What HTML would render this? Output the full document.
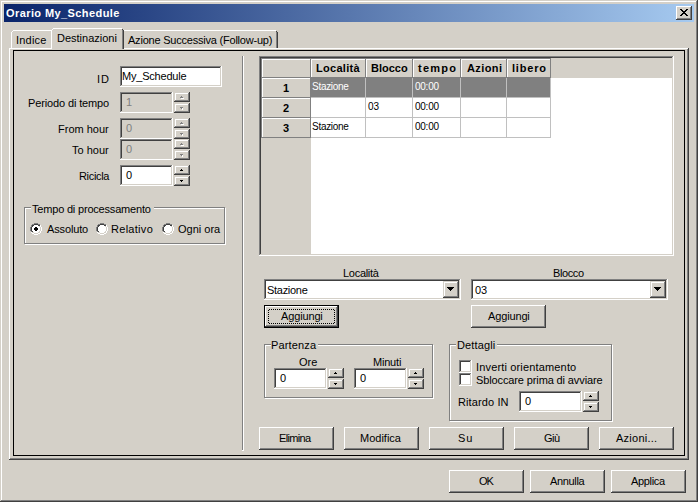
<!DOCTYPE html>
<html><head><meta charset="utf-8"><style>
html,body{margin:0;padding:0;}
body{width:698px;height:502px;background:#D4D0C8;position:relative;overflow:hidden;font:11px/13px "Liberation Sans", sans-serif;color:#000;}
div,span,svg{position:absolute;box-sizing:border-box;}
span{white-space:nowrap;}
</style></head><body>
<div style="left:0px;top:0px;width:698px;height:502px;background:#D4D0C8"></div>
<div style="left:1px;top:1px;width:696px;height:1px;background:#FFFFFF"></div>
<div style="left:1px;top:1px;width:1px;height:500px;background:#FFFFFF"></div>
<div style="left:696px;top:1px;width:1px;height:500px;background:#808080"></div>
<div style="left:1px;top:500px;width:696px;height:1px;background:#808080"></div>
<div style="left:697px;top:0px;width:1px;height:502px;background:#404040"></div>
<div style="left:0px;top:501px;width:698px;height:1px;background:#404040"></div>
<div style="left:4px;top:4px;width:690px;height:18px;background:linear-gradient(to right,#0A246A,#A6CAF0)"></div>
<div style="left:676px;top:6px;width:16px;height:14px;background:#D4D0C8;box-shadow:inset -1px -1px #404040,inset 1px 1px #FFFFFF,inset -2px -2px #808080"></div>
<svg style="left:680px;top:9px" width="8" height="7" shape-rendering="crispEdges"><rect x="0" y="0" width="1" height="1" fill="#000"/><rect x="1" y="0" width="1" height="1" fill="#000"/><rect x="6" y="0" width="1" height="1" fill="#000"/><rect x="7" y="0" width="1" height="1" fill="#000"/><rect x="1" y="1" width="1" height="1" fill="#000"/><rect x="2" y="1" width="1" height="1" fill="#000"/><rect x="5" y="1" width="1" height="1" fill="#000"/><rect x="6" y="1" width="1" height="1" fill="#000"/><rect x="2" y="2" width="1" height="1" fill="#000"/><rect x="3" y="2" width="1" height="1" fill="#000"/><rect x="4" y="2" width="1" height="1" fill="#000"/><rect x="5" y="2" width="1" height="1" fill="#000"/><rect x="3" y="3" width="1" height="1" fill="#000"/><rect x="4" y="3" width="1" height="1" fill="#000"/><rect x="2" y="4" width="1" height="1" fill="#000"/><rect x="3" y="4" width="1" height="1" fill="#000"/><rect x="4" y="4" width="1" height="1" fill="#000"/><rect x="5" y="4" width="1" height="1" fill="#000"/><rect x="1" y="5" width="1" height="1" fill="#000"/><rect x="2" y="5" width="1" height="1" fill="#000"/><rect x="5" y="5" width="1" height="1" fill="#000"/><rect x="6" y="5" width="1" height="1" fill="#000"/><rect x="0" y="6" width="1" height="1" fill="#000"/><rect x="1" y="6" width="1" height="1" fill="#000"/><rect x="6" y="6" width="1" height="1" fill="#000"/><rect x="7" y="6" width="1" height="1" fill="#000"/></svg>
<div style="left:9px;top:48px;width:680px;height:412px;box-shadow:inset -1px -1px #404040,inset 1px 1px #FFFFFF,inset -2px -2px #808080"></div>
<div style="left:13px;top:30px;width:40px;height:1px;background:#FFFFFF"></div>
<div style="left:11px;top:32px;width:1px;height:16px;background:#FFFFFF"></div>
<div style="left:12px;top:31px;width:1px;height:1px;background:#FFFFFF"></div>
<div style="left:122px;top:30px;width:154px;height:1px;background:#FFFFFF"></div>
<div style="left:276px;top:32px;width:1px;height:16px;background:#808080"></div>
<div style="left:277px;top:32px;width:1px;height:16px;background:#404040"></div>
<div style="left:276px;top:31px;width:1px;height:1px;background:#404040"></div>
<div style="left:51px;top:29px;width:73px;height:20px;background:#D4D0C8"></div>
<div style="left:53px;top:28px;width:69px;height:1px;background:#FFFFFF"></div>
<div style="left:51px;top:30px;width:1px;height:19px;background:#FFFFFF"></div>
<div style="left:52px;top:29px;width:1px;height:1px;background:#FFFFFF"></div>
<div style="left:122px;top:30px;width:1px;height:19px;background:#808080"></div>
<div style="left:123px;top:30px;width:1px;height:19px;background:#404040"></div>
<div style="left:122px;top:29px;width:1px;height:1px;background:#404040"></div>
<div style="left:13px;top:50px;width:672px;height:406px;border:1px solid #000"></div>
<div style="left:120px;top:66px;width:102px;height:21px;background:#FFFFFF;box-shadow:inset -1px -1px #FFFFFF,inset 1px 1px #808080,inset -2px -2px #D4D0C8,inset 2px 2px #404040"></div>
<div style="left:120px;top:92px;width:53px;height:21px;background:#D4D0C8;box-shadow:inset -1px -1px #FFFFFF,inset 1px 1px #808080,inset -2px -2px #D4D0C8,inset 2px 2px #404040"></div>
<div style="left:174px;top:92px;width:16px;height:10px;background:#D4D0C8;box-shadow:inset -1px -1px #404040,inset 1px 1px #D4D0C8,inset -2px -2px #808080,inset 2px 2px #FFFFFF"></div>
<div style="left:174px;top:103px;width:16px;height:10px;background:#D4D0C8;box-shadow:inset -1px -1px #404040,inset 1px 1px #D4D0C8,inset -2px -2px #808080,inset 2px 2px #FFFFFF"></div>
<svg style="left:180px;top:96px" width="4" height="3" shape-rendering="crispEdges"><rect x="1" y="0" width="1" height="1" fill="#808080"/><rect x="0" y="1" width="1" height="1" fill="#808080"/><rect x="1" y="1" width="1" height="1" fill="#808080"/><rect x="2" y="1" width="1" height="1" fill="#808080"/><rect x="1" y="2" width="1" height="1" fill="#FFFFFF"/><rect x="2" y="2" width="1" height="1" fill="#FFFFFF"/><rect x="3" y="2" width="1" height="1" fill="#FFFFFF"/></svg>
<svg style="left:180px;top:107px" width="4" height="3" shape-rendering="crispEdges"><rect x="0" y="0" width="1" height="1" fill="#808080"/><rect x="1" y="0" width="1" height="1" fill="#808080"/><rect x="2" y="0" width="1" height="1" fill="#808080"/><rect x="1" y="1" width="1" height="1" fill="#808080"/><rect x="2" y="1" width="1" height="1" fill="#FFFFFF"/><rect x="2" y="2" width="1" height="1" fill="#FFFFFF"/></svg>
<div style="left:120px;top:118px;width:53px;height:21px;background:#D4D0C8;box-shadow:inset -1px -1px #FFFFFF,inset 1px 1px #808080,inset -2px -2px #D4D0C8,inset 2px 2px #404040"></div>
<div style="left:174px;top:118px;width:16px;height:10px;background:#D4D0C8;box-shadow:inset -1px -1px #404040,inset 1px 1px #D4D0C8,inset -2px -2px #808080,inset 2px 2px #FFFFFF"></div>
<div style="left:174px;top:129px;width:16px;height:10px;background:#D4D0C8;box-shadow:inset -1px -1px #404040,inset 1px 1px #D4D0C8,inset -2px -2px #808080,inset 2px 2px #FFFFFF"></div>
<svg style="left:180px;top:122px" width="4" height="3" shape-rendering="crispEdges"><rect x="1" y="0" width="1" height="1" fill="#808080"/><rect x="0" y="1" width="1" height="1" fill="#808080"/><rect x="1" y="1" width="1" height="1" fill="#808080"/><rect x="2" y="1" width="1" height="1" fill="#808080"/><rect x="1" y="2" width="1" height="1" fill="#FFFFFF"/><rect x="2" y="2" width="1" height="1" fill="#FFFFFF"/><rect x="3" y="2" width="1" height="1" fill="#FFFFFF"/></svg>
<svg style="left:180px;top:133px" width="4" height="3" shape-rendering="crispEdges"><rect x="0" y="0" width="1" height="1" fill="#808080"/><rect x="1" y="0" width="1" height="1" fill="#808080"/><rect x="2" y="0" width="1" height="1" fill="#808080"/><rect x="1" y="1" width="1" height="1" fill="#808080"/><rect x="2" y="1" width="1" height="1" fill="#FFFFFF"/><rect x="2" y="2" width="1" height="1" fill="#FFFFFF"/></svg>
<div style="left:120px;top:139px;width:53px;height:21px;background:#D4D0C8;box-shadow:inset -1px -1px #FFFFFF,inset 1px 1px #808080,inset -2px -2px #D4D0C8,inset 2px 2px #404040"></div>
<div style="left:174px;top:139px;width:16px;height:10px;background:#D4D0C8;box-shadow:inset -1px -1px #404040,inset 1px 1px #D4D0C8,inset -2px -2px #808080,inset 2px 2px #FFFFFF"></div>
<div style="left:174px;top:150px;width:16px;height:10px;background:#D4D0C8;box-shadow:inset -1px -1px #404040,inset 1px 1px #D4D0C8,inset -2px -2px #808080,inset 2px 2px #FFFFFF"></div>
<svg style="left:180px;top:143px" width="4" height="3" shape-rendering="crispEdges"><rect x="1" y="0" width="1" height="1" fill="#808080"/><rect x="0" y="1" width="1" height="1" fill="#808080"/><rect x="1" y="1" width="1" height="1" fill="#808080"/><rect x="2" y="1" width="1" height="1" fill="#808080"/><rect x="1" y="2" width="1" height="1" fill="#FFFFFF"/><rect x="2" y="2" width="1" height="1" fill="#FFFFFF"/><rect x="3" y="2" width="1" height="1" fill="#FFFFFF"/></svg>
<svg style="left:180px;top:154px" width="4" height="3" shape-rendering="crispEdges"><rect x="0" y="0" width="1" height="1" fill="#808080"/><rect x="1" y="0" width="1" height="1" fill="#808080"/><rect x="2" y="0" width="1" height="1" fill="#808080"/><rect x="1" y="1" width="1" height="1" fill="#808080"/><rect x="2" y="1" width="1" height="1" fill="#FFFFFF"/><rect x="2" y="2" width="1" height="1" fill="#FFFFFF"/></svg>
<div style="left:120px;top:165px;width:53px;height:21px;background:#FFFFFF;box-shadow:inset -1px -1px #FFFFFF,inset 1px 1px #808080,inset -2px -2px #D4D0C8,inset 2px 2px #404040"></div>
<div style="left:174px;top:165px;width:16px;height:10px;background:#D4D0C8;box-shadow:inset -1px -1px #404040,inset 1px 1px #D4D0C8,inset -2px -2px #808080,inset 2px 2px #FFFFFF"></div>
<div style="left:174px;top:176px;width:16px;height:10px;background:#D4D0C8;box-shadow:inset -1px -1px #404040,inset 1px 1px #D4D0C8,inset -2px -2px #808080,inset 2px 2px #FFFFFF"></div>
<svg style="left:180px;top:169px" width="3" height="2" shape-rendering="crispEdges"><rect x="1" y="0" width="1" height="1" fill="#000"/><rect x="0" y="1" width="1" height="1" fill="#000"/><rect x="1" y="1" width="1" height="1" fill="#000"/><rect x="2" y="1" width="1" height="1" fill="#000"/></svg>
<svg style="left:180px;top:180px" width="3" height="2" shape-rendering="crispEdges"><rect x="0" y="0" width="1" height="1" fill="#000"/><rect x="1" y="0" width="1" height="1" fill="#000"/><rect x="2" y="0" width="1" height="1" fill="#000"/><rect x="1" y="1" width="1" height="1" fill="#000"/></svg>
<div style="left:25px;top:208px;width:201px;height:37px;border:1px solid #FFFFFF;box-sizing:border-box"></div>
<div style="left:24px;top:207px;width:201px;height:37px;border:1px solid #808080;box-sizing:border-box"></div>
<div style="left:31px;top:203px;width:123px;height:8px;background:#D4D0C8"></div>
<svg style="left:30px;top:223px" width="12" height="12" shape-rendering="crispEdges"><rect x="4" y="0" width="1" height="1" fill="#808080"/><rect x="5" y="0" width="1" height="1" fill="#808080"/><rect x="6" y="0" width="1" height="1" fill="#808080"/><rect x="7" y="0" width="1" height="1" fill="#808080"/><rect x="2" y="1" width="1" height="1" fill="#808080"/><rect x="3" y="1" width="1" height="1" fill="#808080"/><rect x="4" y="1" width="1" height="1" fill="#404040"/><rect x="5" y="1" width="1" height="1" fill="#404040"/><rect x="6" y="1" width="1" height="1" fill="#404040"/><rect x="7" y="1" width="1" height="1" fill="#404040"/><rect x="8" y="1" width="1" height="1" fill="#808080"/><rect x="9" y="1" width="1" height="1" fill="#808080"/><rect x="1" y="2" width="1" height="1" fill="#808080"/><rect x="2" y="2" width="1" height="1" fill="#404040"/><rect x="3" y="2" width="1" height="1" fill="#404040"/><rect x="4" y="2" width="1" height="1" fill="#FFFFFF"/><rect x="5" y="2" width="1" height="1" fill="#FFFFFF"/><rect x="6" y="2" width="1" height="1" fill="#FFFFFF"/><rect x="7" y="2" width="1" height="1" fill="#FFFFFF"/><rect x="8" y="2" width="1" height="1" fill="#404040"/><rect x="9" y="2" width="1" height="1" fill="#404040"/><rect x="10" y="2" width="1" height="1" fill="#FFFFFF"/><rect x="1" y="3" width="1" height="1" fill="#808080"/><rect x="2" y="3" width="1" height="1" fill="#404040"/><rect x="3" y="3" width="1" height="1" fill="#FFFFFF"/><rect x="4" y="3" width="1" height="1" fill="#FFFFFF"/><rect x="5" y="3" width="1" height="1" fill="#FFFFFF"/><rect x="6" y="3" width="1" height="1" fill="#FFFFFF"/><rect x="7" y="3" width="1" height="1" fill="#FFFFFF"/><rect x="8" y="3" width="1" height="1" fill="#FFFFFF"/><rect x="9" y="3" width="1" height="1" fill="#D4D0C8"/><rect x="10" y="3" width="1" height="1" fill="#FFFFFF"/><rect x="0" y="4" width="1" height="1" fill="#808080"/><rect x="1" y="4" width="1" height="1" fill="#404040"/><rect x="2" y="4" width="1" height="1" fill="#FFFFFF"/><rect x="3" y="4" width="1" height="1" fill="#FFFFFF"/><rect x="4" y="4" width="1" height="1" fill="#FFFFFF"/><rect x="5" y="4" width="1" height="1" fill="#FFFFFF"/><rect x="6" y="4" width="1" height="1" fill="#FFFFFF"/><rect x="7" y="4" width="1" height="1" fill="#FFFFFF"/><rect x="8" y="4" width="1" height="1" fill="#FFFFFF"/><rect x="9" y="4" width="1" height="1" fill="#FFFFFF"/><rect x="10" y="4" width="1" height="1" fill="#D4D0C8"/><rect x="11" y="4" width="1" height="1" fill="#FFFFFF"/><rect x="0" y="5" width="1" height="1" fill="#808080"/><rect x="1" y="5" width="1" height="1" fill="#404040"/><rect x="2" y="5" width="1" height="1" fill="#FFFFFF"/><rect x="3" y="5" width="1" height="1" fill="#FFFFFF"/><rect x="4" y="5" width="1" height="1" fill="#FFFFFF"/><rect x="5" y="5" width="1" height="1" fill="#FFFFFF"/><rect x="6" y="5" width="1" height="1" fill="#FFFFFF"/><rect x="7" y="5" width="1" height="1" fill="#FFFFFF"/><rect x="8" y="5" width="1" height="1" fill="#FFFFFF"/><rect x="9" y="5" width="1" height="1" fill="#FFFFFF"/><rect x="10" y="5" width="1" height="1" fill="#D4D0C8"/><rect x="11" y="5" width="1" height="1" fill="#FFFFFF"/><rect x="0" y="6" width="1" height="1" fill="#808080"/><rect x="1" y="6" width="1" height="1" fill="#404040"/><rect x="2" y="6" width="1" height="1" fill="#FFFFFF"/><rect x="3" y="6" width="1" height="1" fill="#FFFFFF"/><rect x="4" y="6" width="1" height="1" fill="#FFFFFF"/><rect x="5" y="6" width="1" height="1" fill="#FFFFFF"/><rect x="6" y="6" width="1" height="1" fill="#FFFFFF"/><rect x="7" y="6" width="1" height="1" fill="#FFFFFF"/><rect x="8" y="6" width="1" height="1" fill="#FFFFFF"/><rect x="9" y="6" width="1" height="1" fill="#FFFFFF"/><rect x="10" y="6" width="1" height="1" fill="#D4D0C8"/><rect x="11" y="6" width="1" height="1" fill="#FFFFFF"/><rect x="0" y="7" width="1" height="1" fill="#808080"/><rect x="1" y="7" width="1" height="1" fill="#404040"/><rect x="2" y="7" width="1" height="1" fill="#FFFFFF"/><rect x="3" y="7" width="1" height="1" fill="#FFFFFF"/><rect x="4" y="7" width="1" height="1" fill="#FFFFFF"/><rect x="5" y="7" width="1" height="1" fill="#FFFFFF"/><rect x="6" y="7" width="1" height="1" fill="#FFFFFF"/><rect x="7" y="7" width="1" height="1" fill="#FFFFFF"/><rect x="8" y="7" width="1" height="1" fill="#FFFFFF"/><rect x="9" y="7" width="1" height="1" fill="#FFFFFF"/><rect x="10" y="7" width="1" height="1" fill="#D4D0C8"/><rect x="11" y="7" width="1" height="1" fill="#FFFFFF"/><rect x="1" y="8" width="1" height="1" fill="#808080"/><rect x="2" y="8" width="1" height="1" fill="#404040"/><rect x="3" y="8" width="1" height="1" fill="#FFFFFF"/><rect x="4" y="8" width="1" height="1" fill="#FFFFFF"/><rect x="5" y="8" width="1" height="1" fill="#FFFFFF"/><rect x="6" y="8" width="1" height="1" fill="#FFFFFF"/><rect x="7" y="8" width="1" height="1" fill="#FFFFFF"/><rect x="8" y="8" width="1" height="1" fill="#FFFFFF"/><rect x="9" y="8" width="1" height="1" fill="#D4D0C8"/><rect x="10" y="8" width="1" height="1" fill="#FFFFFF"/><rect x="1" y="9" width="1" height="1" fill="#FFFFFF"/><rect x="2" y="9" width="1" height="1" fill="#D4D0C8"/><rect x="3" y="9" width="1" height="1" fill="#D4D0C8"/><rect x="4" y="9" width="1" height="1" fill="#FFFFFF"/><rect x="5" y="9" width="1" height="1" fill="#FFFFFF"/><rect x="6" y="9" width="1" height="1" fill="#FFFFFF"/><rect x="7" y="9" width="1" height="1" fill="#FFFFFF"/><rect x="8" y="9" width="1" height="1" fill="#D4D0C8"/><rect x="9" y="9" width="1" height="1" fill="#D4D0C8"/><rect x="10" y="9" width="1" height="1" fill="#FFFFFF"/><rect x="2" y="10" width="1" height="1" fill="#FFFFFF"/><rect x="3" y="10" width="1" height="1" fill="#FFFFFF"/><rect x="4" y="10" width="1" height="1" fill="#D4D0C8"/><rect x="5" y="10" width="1" height="1" fill="#D4D0C8"/><rect x="6" y="10" width="1" height="1" fill="#D4D0C8"/><rect x="7" y="10" width="1" height="1" fill="#D4D0C8"/><rect x="8" y="10" width="1" height="1" fill="#FFFFFF"/><rect x="9" y="10" width="1" height="1" fill="#FFFFFF"/><rect x="4" y="11" width="1" height="1" fill="#FFFFFF"/><rect x="5" y="11" width="1" height="1" fill="#FFFFFF"/><rect x="6" y="11" width="1" height="1" fill="#FFFFFF"/><rect x="7" y="11" width="1" height="1" fill="#FFFFFF"/></svg>
<svg style="left:34px;top:227px" width="4" height="4" shape-rendering="crispEdges"><rect x="1" y="0" width="1" height="1" fill="#000"/><rect x="2" y="0" width="1" height="1" fill="#000"/><rect x="0" y="1" width="1" height="1" fill="#000"/><rect x="1" y="1" width="1" height="1" fill="#000"/><rect x="2" y="1" width="1" height="1" fill="#000"/><rect x="3" y="1" width="1" height="1" fill="#000"/><rect x="0" y="2" width="1" height="1" fill="#000"/><rect x="1" y="2" width="1" height="1" fill="#000"/><rect x="2" y="2" width="1" height="1" fill="#000"/><rect x="3" y="2" width="1" height="1" fill="#000"/><rect x="1" y="3" width="1" height="1" fill="#000"/><rect x="2" y="3" width="1" height="1" fill="#000"/></svg>
<svg style="left:96px;top:223px" width="12" height="12" shape-rendering="crispEdges"><rect x="4" y="0" width="1" height="1" fill="#808080"/><rect x="5" y="0" width="1" height="1" fill="#808080"/><rect x="6" y="0" width="1" height="1" fill="#808080"/><rect x="7" y="0" width="1" height="1" fill="#808080"/><rect x="2" y="1" width="1" height="1" fill="#808080"/><rect x="3" y="1" width="1" height="1" fill="#808080"/><rect x="4" y="1" width="1" height="1" fill="#404040"/><rect x="5" y="1" width="1" height="1" fill="#404040"/><rect x="6" y="1" width="1" height="1" fill="#404040"/><rect x="7" y="1" width="1" height="1" fill="#404040"/><rect x="8" y="1" width="1" height="1" fill="#808080"/><rect x="9" y="1" width="1" height="1" fill="#808080"/><rect x="1" y="2" width="1" height="1" fill="#808080"/><rect x="2" y="2" width="1" height="1" fill="#404040"/><rect x="3" y="2" width="1" height="1" fill="#404040"/><rect x="4" y="2" width="1" height="1" fill="#FFFFFF"/><rect x="5" y="2" width="1" height="1" fill="#FFFFFF"/><rect x="6" y="2" width="1" height="1" fill="#FFFFFF"/><rect x="7" y="2" width="1" height="1" fill="#FFFFFF"/><rect x="8" y="2" width="1" height="1" fill="#404040"/><rect x="9" y="2" width="1" height="1" fill="#404040"/><rect x="10" y="2" width="1" height="1" fill="#FFFFFF"/><rect x="1" y="3" width="1" height="1" fill="#808080"/><rect x="2" y="3" width="1" height="1" fill="#404040"/><rect x="3" y="3" width="1" height="1" fill="#FFFFFF"/><rect x="4" y="3" width="1" height="1" fill="#FFFFFF"/><rect x="5" y="3" width="1" height="1" fill="#FFFFFF"/><rect x="6" y="3" width="1" height="1" fill="#FFFFFF"/><rect x="7" y="3" width="1" height="1" fill="#FFFFFF"/><rect x="8" y="3" width="1" height="1" fill="#FFFFFF"/><rect x="9" y="3" width="1" height="1" fill="#D4D0C8"/><rect x="10" y="3" width="1" height="1" fill="#FFFFFF"/><rect x="0" y="4" width="1" height="1" fill="#808080"/><rect x="1" y="4" width="1" height="1" fill="#404040"/><rect x="2" y="4" width="1" height="1" fill="#FFFFFF"/><rect x="3" y="4" width="1" height="1" fill="#FFFFFF"/><rect x="4" y="4" width="1" height="1" fill="#FFFFFF"/><rect x="5" y="4" width="1" height="1" fill="#FFFFFF"/><rect x="6" y="4" width="1" height="1" fill="#FFFFFF"/><rect x="7" y="4" width="1" height="1" fill="#FFFFFF"/><rect x="8" y="4" width="1" height="1" fill="#FFFFFF"/><rect x="9" y="4" width="1" height="1" fill="#FFFFFF"/><rect x="10" y="4" width="1" height="1" fill="#D4D0C8"/><rect x="11" y="4" width="1" height="1" fill="#FFFFFF"/><rect x="0" y="5" width="1" height="1" fill="#808080"/><rect x="1" y="5" width="1" height="1" fill="#404040"/><rect x="2" y="5" width="1" height="1" fill="#FFFFFF"/><rect x="3" y="5" width="1" height="1" fill="#FFFFFF"/><rect x="4" y="5" width="1" height="1" fill="#FFFFFF"/><rect x="5" y="5" width="1" height="1" fill="#FFFFFF"/><rect x="6" y="5" width="1" height="1" fill="#FFFFFF"/><rect x="7" y="5" width="1" height="1" fill="#FFFFFF"/><rect x="8" y="5" width="1" height="1" fill="#FFFFFF"/><rect x="9" y="5" width="1" height="1" fill="#FFFFFF"/><rect x="10" y="5" width="1" height="1" fill="#D4D0C8"/><rect x="11" y="5" width="1" height="1" fill="#FFFFFF"/><rect x="0" y="6" width="1" height="1" fill="#808080"/><rect x="1" y="6" width="1" height="1" fill="#404040"/><rect x="2" y="6" width="1" height="1" fill="#FFFFFF"/><rect x="3" y="6" width="1" height="1" fill="#FFFFFF"/><rect x="4" y="6" width="1" height="1" fill="#FFFFFF"/><rect x="5" y="6" width="1" height="1" fill="#FFFFFF"/><rect x="6" y="6" width="1" height="1" fill="#FFFFFF"/><rect x="7" y="6" width="1" height="1" fill="#FFFFFF"/><rect x="8" y="6" width="1" height="1" fill="#FFFFFF"/><rect x="9" y="6" width="1" height="1" fill="#FFFFFF"/><rect x="10" y="6" width="1" height="1" fill="#D4D0C8"/><rect x="11" y="6" width="1" height="1" fill="#FFFFFF"/><rect x="0" y="7" width="1" height="1" fill="#808080"/><rect x="1" y="7" width="1" height="1" fill="#404040"/><rect x="2" y="7" width="1" height="1" fill="#FFFFFF"/><rect x="3" y="7" width="1" height="1" fill="#FFFFFF"/><rect x="4" y="7" width="1" height="1" fill="#FFFFFF"/><rect x="5" y="7" width="1" height="1" fill="#FFFFFF"/><rect x="6" y="7" width="1" height="1" fill="#FFFFFF"/><rect x="7" y="7" width="1" height="1" fill="#FFFFFF"/><rect x="8" y="7" width="1" height="1" fill="#FFFFFF"/><rect x="9" y="7" width="1" height="1" fill="#FFFFFF"/><rect x="10" y="7" width="1" height="1" fill="#D4D0C8"/><rect x="11" y="7" width="1" height="1" fill="#FFFFFF"/><rect x="1" y="8" width="1" height="1" fill="#808080"/><rect x="2" y="8" width="1" height="1" fill="#404040"/><rect x="3" y="8" width="1" height="1" fill="#FFFFFF"/><rect x="4" y="8" width="1" height="1" fill="#FFFFFF"/><rect x="5" y="8" width="1" height="1" fill="#FFFFFF"/><rect x="6" y="8" width="1" height="1" fill="#FFFFFF"/><rect x="7" y="8" width="1" height="1" fill="#FFFFFF"/><rect x="8" y="8" width="1" height="1" fill="#FFFFFF"/><rect x="9" y="8" width="1" height="1" fill="#D4D0C8"/><rect x="10" y="8" width="1" height="1" fill="#FFFFFF"/><rect x="1" y="9" width="1" height="1" fill="#FFFFFF"/><rect x="2" y="9" width="1" height="1" fill="#D4D0C8"/><rect x="3" y="9" width="1" height="1" fill="#D4D0C8"/><rect x="4" y="9" width="1" height="1" fill="#FFFFFF"/><rect x="5" y="9" width="1" height="1" fill="#FFFFFF"/><rect x="6" y="9" width="1" height="1" fill="#FFFFFF"/><rect x="7" y="9" width="1" height="1" fill="#FFFFFF"/><rect x="8" y="9" width="1" height="1" fill="#D4D0C8"/><rect x="9" y="9" width="1" height="1" fill="#D4D0C8"/><rect x="10" y="9" width="1" height="1" fill="#FFFFFF"/><rect x="2" y="10" width="1" height="1" fill="#FFFFFF"/><rect x="3" y="10" width="1" height="1" fill="#FFFFFF"/><rect x="4" y="10" width="1" height="1" fill="#D4D0C8"/><rect x="5" y="10" width="1" height="1" fill="#D4D0C8"/><rect x="6" y="10" width="1" height="1" fill="#D4D0C8"/><rect x="7" y="10" width="1" height="1" fill="#D4D0C8"/><rect x="8" y="10" width="1" height="1" fill="#FFFFFF"/><rect x="9" y="10" width="1" height="1" fill="#FFFFFF"/><rect x="4" y="11" width="1" height="1" fill="#FFFFFF"/><rect x="5" y="11" width="1" height="1" fill="#FFFFFF"/><rect x="6" y="11" width="1" height="1" fill="#FFFFFF"/><rect x="7" y="11" width="1" height="1" fill="#FFFFFF"/></svg>
<svg style="left:162px;top:223px" width="12" height="12" shape-rendering="crispEdges"><rect x="4" y="0" width="1" height="1" fill="#808080"/><rect x="5" y="0" width="1" height="1" fill="#808080"/><rect x="6" y="0" width="1" height="1" fill="#808080"/><rect x="7" y="0" width="1" height="1" fill="#808080"/><rect x="2" y="1" width="1" height="1" fill="#808080"/><rect x="3" y="1" width="1" height="1" fill="#808080"/><rect x="4" y="1" width="1" height="1" fill="#404040"/><rect x="5" y="1" width="1" height="1" fill="#404040"/><rect x="6" y="1" width="1" height="1" fill="#404040"/><rect x="7" y="1" width="1" height="1" fill="#404040"/><rect x="8" y="1" width="1" height="1" fill="#808080"/><rect x="9" y="1" width="1" height="1" fill="#808080"/><rect x="1" y="2" width="1" height="1" fill="#808080"/><rect x="2" y="2" width="1" height="1" fill="#404040"/><rect x="3" y="2" width="1" height="1" fill="#404040"/><rect x="4" y="2" width="1" height="1" fill="#FFFFFF"/><rect x="5" y="2" width="1" height="1" fill="#FFFFFF"/><rect x="6" y="2" width="1" height="1" fill="#FFFFFF"/><rect x="7" y="2" width="1" height="1" fill="#FFFFFF"/><rect x="8" y="2" width="1" height="1" fill="#404040"/><rect x="9" y="2" width="1" height="1" fill="#404040"/><rect x="10" y="2" width="1" height="1" fill="#FFFFFF"/><rect x="1" y="3" width="1" height="1" fill="#808080"/><rect x="2" y="3" width="1" height="1" fill="#404040"/><rect x="3" y="3" width="1" height="1" fill="#FFFFFF"/><rect x="4" y="3" width="1" height="1" fill="#FFFFFF"/><rect x="5" y="3" width="1" height="1" fill="#FFFFFF"/><rect x="6" y="3" width="1" height="1" fill="#FFFFFF"/><rect x="7" y="3" width="1" height="1" fill="#FFFFFF"/><rect x="8" y="3" width="1" height="1" fill="#FFFFFF"/><rect x="9" y="3" width="1" height="1" fill="#D4D0C8"/><rect x="10" y="3" width="1" height="1" fill="#FFFFFF"/><rect x="0" y="4" width="1" height="1" fill="#808080"/><rect x="1" y="4" width="1" height="1" fill="#404040"/><rect x="2" y="4" width="1" height="1" fill="#FFFFFF"/><rect x="3" y="4" width="1" height="1" fill="#FFFFFF"/><rect x="4" y="4" width="1" height="1" fill="#FFFFFF"/><rect x="5" y="4" width="1" height="1" fill="#FFFFFF"/><rect x="6" y="4" width="1" height="1" fill="#FFFFFF"/><rect x="7" y="4" width="1" height="1" fill="#FFFFFF"/><rect x="8" y="4" width="1" height="1" fill="#FFFFFF"/><rect x="9" y="4" width="1" height="1" fill="#FFFFFF"/><rect x="10" y="4" width="1" height="1" fill="#D4D0C8"/><rect x="11" y="4" width="1" height="1" fill="#FFFFFF"/><rect x="0" y="5" width="1" height="1" fill="#808080"/><rect x="1" y="5" width="1" height="1" fill="#404040"/><rect x="2" y="5" width="1" height="1" fill="#FFFFFF"/><rect x="3" y="5" width="1" height="1" fill="#FFFFFF"/><rect x="4" y="5" width="1" height="1" fill="#FFFFFF"/><rect x="5" y="5" width="1" height="1" fill="#FFFFFF"/><rect x="6" y="5" width="1" height="1" fill="#FFFFFF"/><rect x="7" y="5" width="1" height="1" fill="#FFFFFF"/><rect x="8" y="5" width="1" height="1" fill="#FFFFFF"/><rect x="9" y="5" width="1" height="1" fill="#FFFFFF"/><rect x="10" y="5" width="1" height="1" fill="#D4D0C8"/><rect x="11" y="5" width="1" height="1" fill="#FFFFFF"/><rect x="0" y="6" width="1" height="1" fill="#808080"/><rect x="1" y="6" width="1" height="1" fill="#404040"/><rect x="2" y="6" width="1" height="1" fill="#FFFFFF"/><rect x="3" y="6" width="1" height="1" fill="#FFFFFF"/><rect x="4" y="6" width="1" height="1" fill="#FFFFFF"/><rect x="5" y="6" width="1" height="1" fill="#FFFFFF"/><rect x="6" y="6" width="1" height="1" fill="#FFFFFF"/><rect x="7" y="6" width="1" height="1" fill="#FFFFFF"/><rect x="8" y="6" width="1" height="1" fill="#FFFFFF"/><rect x="9" y="6" width="1" height="1" fill="#FFFFFF"/><rect x="10" y="6" width="1" height="1" fill="#D4D0C8"/><rect x="11" y="6" width="1" height="1" fill="#FFFFFF"/><rect x="0" y="7" width="1" height="1" fill="#808080"/><rect x="1" y="7" width="1" height="1" fill="#404040"/><rect x="2" y="7" width="1" height="1" fill="#FFFFFF"/><rect x="3" y="7" width="1" height="1" fill="#FFFFFF"/><rect x="4" y="7" width="1" height="1" fill="#FFFFFF"/><rect x="5" y="7" width="1" height="1" fill="#FFFFFF"/><rect x="6" y="7" width="1" height="1" fill="#FFFFFF"/><rect x="7" y="7" width="1" height="1" fill="#FFFFFF"/><rect x="8" y="7" width="1" height="1" fill="#FFFFFF"/><rect x="9" y="7" width="1" height="1" fill="#FFFFFF"/><rect x="10" y="7" width="1" height="1" fill="#D4D0C8"/><rect x="11" y="7" width="1" height="1" fill="#FFFFFF"/><rect x="1" y="8" width="1" height="1" fill="#808080"/><rect x="2" y="8" width="1" height="1" fill="#404040"/><rect x="3" y="8" width="1" height="1" fill="#FFFFFF"/><rect x="4" y="8" width="1" height="1" fill="#FFFFFF"/><rect x="5" y="8" width="1" height="1" fill="#FFFFFF"/><rect x="6" y="8" width="1" height="1" fill="#FFFFFF"/><rect x="7" y="8" width="1" height="1" fill="#FFFFFF"/><rect x="8" y="8" width="1" height="1" fill="#FFFFFF"/><rect x="9" y="8" width="1" height="1" fill="#D4D0C8"/><rect x="10" y="8" width="1" height="1" fill="#FFFFFF"/><rect x="1" y="9" width="1" height="1" fill="#FFFFFF"/><rect x="2" y="9" width="1" height="1" fill="#D4D0C8"/><rect x="3" y="9" width="1" height="1" fill="#D4D0C8"/><rect x="4" y="9" width="1" height="1" fill="#FFFFFF"/><rect x="5" y="9" width="1" height="1" fill="#FFFFFF"/><rect x="6" y="9" width="1" height="1" fill="#FFFFFF"/><rect x="7" y="9" width="1" height="1" fill="#FFFFFF"/><rect x="8" y="9" width="1" height="1" fill="#D4D0C8"/><rect x="9" y="9" width="1" height="1" fill="#D4D0C8"/><rect x="10" y="9" width="1" height="1" fill="#FFFFFF"/><rect x="2" y="10" width="1" height="1" fill="#FFFFFF"/><rect x="3" y="10" width="1" height="1" fill="#FFFFFF"/><rect x="4" y="10" width="1" height="1" fill="#D4D0C8"/><rect x="5" y="10" width="1" height="1" fill="#D4D0C8"/><rect x="6" y="10" width="1" height="1" fill="#D4D0C8"/><rect x="7" y="10" width="1" height="1" fill="#D4D0C8"/><rect x="8" y="10" width="1" height="1" fill="#FFFFFF"/><rect x="9" y="10" width="1" height="1" fill="#FFFFFF"/><rect x="4" y="11" width="1" height="1" fill="#FFFFFF"/><rect x="5" y="11" width="1" height="1" fill="#FFFFFF"/><rect x="6" y="11" width="1" height="1" fill="#FFFFFF"/><rect x="7" y="11" width="1" height="1" fill="#FFFFFF"/></svg>
<div style="left:242px;top:56px;width:1px;height:394px;background:#808080"></div>
<div style="left:243px;top:56px;width:1px;height:395px;background:#FFFFFF"></div>
<div style="left:242px;top:450px;width:1px;height:1px;background:#FFFFFF"></div>
<div style="left:259px;top:56px;width:415px;height:200px;background:#FFFFFF;box-shadow:inset -1px -1px #FFFFFF,inset 1px 1px #808080,inset -2px -2px #D4D0C8,inset 2px 2px #404040"></div>
<div style="left:261px;top:58px;width:411px;height:196px;background:#FFFFFF"></div>
<div style="left:261px;top:58px;width:50px;height:196px;background:#D4D0C8"></div>
<div style="left:261px;top:58px;width:411px;height:20px;background:#D4D0C8"></div>
<div style="left:311px;top:78px;width:240px;height:19px;background:#808080"></div>
<div style="left:311px;top:97px;width:240px;height:1px;background:#C0C0C0"></div>
<div style="left:311px;top:117px;width:240px;height:1px;background:#C0C0C0"></div>
<div style="left:311px;top:137px;width:240px;height:1px;background:#C0C0C0"></div>
<div style="left:365px;top:78px;width:1px;height:60px;background:#C0C0C0"></div>
<div style="left:412px;top:78px;width:1px;height:60px;background:#C0C0C0"></div>
<div style="left:460px;top:78px;width:1px;height:60px;background:#C0C0C0"></div>
<div style="left:506px;top:78px;width:1px;height:60px;background:#C0C0C0"></div>
<div style="left:550px;top:78px;width:1px;height:60px;background:#C0C0C0"></div>
<div style="left:262px;top:59px;width:1px;height:18px;background:#FFFFFF"></div>
<div style="left:262px;top:59px;width:48px;height:1px;background:#FFFFFF"></div>
<div style="left:311px;top:59px;width:1px;height:18px;background:#FFFFFF"></div>
<div style="left:311px;top:59px;width:54px;height:1px;background:#FFFFFF"></div>
<div style="left:366px;top:59px;width:1px;height:18px;background:#FFFFFF"></div>
<div style="left:366px;top:59px;width:46px;height:1px;background:#FFFFFF"></div>
<div style="left:413px;top:59px;width:1px;height:18px;background:#FFFFFF"></div>
<div style="left:413px;top:59px;width:47px;height:1px;background:#FFFFFF"></div>
<div style="left:461px;top:59px;width:1px;height:18px;background:#FFFFFF"></div>
<div style="left:461px;top:59px;width:45px;height:1px;background:#FFFFFF"></div>
<div style="left:507px;top:59px;width:1px;height:18px;background:#FFFFFF"></div>
<div style="left:507px;top:59px;width:43px;height:1px;background:#FFFFFF"></div>
<div style="left:261px;top:58px;width:1px;height:20px;background:#808080"></div>
<div style="left:310px;top:58px;width:1px;height:20px;background:#808080"></div>
<div style="left:365px;top:58px;width:1px;height:20px;background:#808080"></div>
<div style="left:412px;top:58px;width:1px;height:20px;background:#808080"></div>
<div style="left:460px;top:58px;width:1px;height:20px;background:#808080"></div>
<div style="left:506px;top:58px;width:1px;height:20px;background:#808080"></div>
<div style="left:550px;top:58px;width:1px;height:20px;background:#808080"></div>
<div style="left:261px;top:58px;width:290px;height:1px;background:#808080"></div>
<div style="left:261px;top:77px;width:290px;height:1px;background:#808080"></div>
<div style="left:262px;top:78px;width:48px;height:1px;background:#FFFFFF"></div>
<div style="left:262px;top:78px;width:1px;height:19px;background:#FFFFFF"></div>
<div style="left:261px;top:97px;width:50px;height:1px;background:#808080"></div>
<div style="left:262px;top:98px;width:48px;height:1px;background:#FFFFFF"></div>
<div style="left:262px;top:98px;width:1px;height:19px;background:#FFFFFF"></div>
<div style="left:261px;top:117px;width:50px;height:1px;background:#808080"></div>
<div style="left:262px;top:118px;width:48px;height:1px;background:#FFFFFF"></div>
<div style="left:262px;top:118px;width:1px;height:19px;background:#FFFFFF"></div>
<div style="left:261px;top:137px;width:50px;height:1px;background:#808080"></div>
<div style="left:261px;top:58px;width:1px;height:80px;background:#808080"></div>
<div style="left:310px;top:58px;width:1px;height:80px;background:#808080"></div>
<div style="left:264px;top:279px;width:197px;height:21px;background:#FFFFFF;box-shadow:inset -1px -1px #FFFFFF,inset 1px 1px #808080,inset -2px -2px #D4D0C8,inset 2px 2px #404040"></div>
<div style="left:443px;top:281px;width:16px;height:17px;background:#D4D0C8;box-shadow:inset -1px -1px #404040,inset 1px 1px #D4D0C8,inset -2px -2px #808080,inset 2px 2px #FFFFFF"></div>
<svg style="left:447px;top:287px" width="7" height="4" shape-rendering="crispEdges"><rect x="0" y="0" width="1" height="1" fill="#000"/><rect x="1" y="0" width="1" height="1" fill="#000"/><rect x="2" y="0" width="1" height="1" fill="#000"/><rect x="3" y="0" width="1" height="1" fill="#000"/><rect x="4" y="0" width="1" height="1" fill="#000"/><rect x="5" y="0" width="1" height="1" fill="#000"/><rect x="6" y="0" width="1" height="1" fill="#000"/><rect x="1" y="1" width="1" height="1" fill="#000"/><rect x="2" y="1" width="1" height="1" fill="#000"/><rect x="3" y="1" width="1" height="1" fill="#000"/><rect x="4" y="1" width="1" height="1" fill="#000"/><rect x="5" y="1" width="1" height="1" fill="#000"/><rect x="2" y="2" width="1" height="1" fill="#000"/><rect x="3" y="2" width="1" height="1" fill="#000"/><rect x="4" y="2" width="1" height="1" fill="#000"/><rect x="3" y="3" width="1" height="1" fill="#000"/></svg>
<div style="left:471px;top:279px;width:197px;height:21px;background:#FFFFFF;box-shadow:inset -1px -1px #FFFFFF,inset 1px 1px #808080,inset -2px -2px #D4D0C8,inset 2px 2px #404040"></div>
<div style="left:650px;top:281px;width:16px;height:17px;background:#D4D0C8;box-shadow:inset -1px -1px #404040,inset 1px 1px #D4D0C8,inset -2px -2px #808080,inset 2px 2px #FFFFFF"></div>
<svg style="left:654px;top:287px" width="7" height="4" shape-rendering="crispEdges"><rect x="0" y="0" width="1" height="1" fill="#000"/><rect x="1" y="0" width="1" height="1" fill="#000"/><rect x="2" y="0" width="1" height="1" fill="#000"/><rect x="3" y="0" width="1" height="1" fill="#000"/><rect x="4" y="0" width="1" height="1" fill="#000"/><rect x="5" y="0" width="1" height="1" fill="#000"/><rect x="6" y="0" width="1" height="1" fill="#000"/><rect x="1" y="1" width="1" height="1" fill="#000"/><rect x="2" y="1" width="1" height="1" fill="#000"/><rect x="3" y="1" width="1" height="1" fill="#000"/><rect x="4" y="1" width="1" height="1" fill="#000"/><rect x="5" y="1" width="1" height="1" fill="#000"/><rect x="2" y="2" width="1" height="1" fill="#000"/><rect x="3" y="2" width="1" height="1" fill="#000"/><rect x="4" y="2" width="1" height="1" fill="#000"/><rect x="3" y="3" width="1" height="1" fill="#000"/></svg>
<div style="left:264px;top:305px;width:75px;height:23px;background:#D4D0C8;box-shadow:inset 0 0 0 1px #000,inset -2px -2px #404040,inset 2px 2px #FFFFFF,inset -3px -3px #808080"></div>
<svg style="left:0;top:0" width="698" height="502" shape-rendering="crispEdges"><rect x="268" y="310" width="1" height="1"/><rect x="268" y="312" width="1" height="1"/><rect x="268" y="314" width="1" height="1"/><rect x="268" y="316" width="1" height="1"/><rect x="268" y="318" width="1" height="1"/><rect x="268" y="320" width="1" height="1"/><rect x="268" y="322" width="1" height="1"/><rect x="269" y="309" width="1" height="1"/><rect x="269" y="323" width="1" height="1"/><rect x="271" y="309" width="1" height="1"/><rect x="271" y="323" width="1" height="1"/><rect x="273" y="309" width="1" height="1"/><rect x="273" y="323" width="1" height="1"/><rect x="275" y="309" width="1" height="1"/><rect x="275" y="323" width="1" height="1"/><rect x="277" y="309" width="1" height="1"/><rect x="277" y="323" width="1" height="1"/><rect x="279" y="309" width="1" height="1"/><rect x="279" y="323" width="1" height="1"/><rect x="281" y="309" width="1" height="1"/><rect x="281" y="323" width="1" height="1"/><rect x="283" y="309" width="1" height="1"/><rect x="283" y="323" width="1" height="1"/><rect x="285" y="309" width="1" height="1"/><rect x="285" y="323" width="1" height="1"/><rect x="287" y="309" width="1" height="1"/><rect x="287" y="323" width="1" height="1"/><rect x="289" y="309" width="1" height="1"/><rect x="289" y="323" width="1" height="1"/><rect x="291" y="309" width="1" height="1"/><rect x="291" y="323" width="1" height="1"/><rect x="293" y="309" width="1" height="1"/><rect x="293" y="323" width="1" height="1"/><rect x="295" y="309" width="1" height="1"/><rect x="295" y="323" width="1" height="1"/><rect x="297" y="309" width="1" height="1"/><rect x="297" y="323" width="1" height="1"/><rect x="299" y="309" width="1" height="1"/><rect x="299" y="323" width="1" height="1"/><rect x="301" y="309" width="1" height="1"/><rect x="301" y="323" width="1" height="1"/><rect x="303" y="309" width="1" height="1"/><rect x="303" y="323" width="1" height="1"/><rect x="305" y="309" width="1" height="1"/><rect x="305" y="323" width="1" height="1"/><rect x="307" y="309" width="1" height="1"/><rect x="307" y="323" width="1" height="1"/><rect x="309" y="309" width="1" height="1"/><rect x="309" y="323" width="1" height="1"/><rect x="311" y="309" width="1" height="1"/><rect x="311" y="323" width="1" height="1"/><rect x="313" y="309" width="1" height="1"/><rect x="313" y="323" width="1" height="1"/><rect x="315" y="309" width="1" height="1"/><rect x="315" y="323" width="1" height="1"/><rect x="317" y="309" width="1" height="1"/><rect x="317" y="323" width="1" height="1"/><rect x="319" y="309" width="1" height="1"/><rect x="319" y="323" width="1" height="1"/><rect x="321" y="309" width="1" height="1"/><rect x="321" y="323" width="1" height="1"/><rect x="323" y="309" width="1" height="1"/><rect x="323" y="323" width="1" height="1"/><rect x="325" y="309" width="1" height="1"/><rect x="325" y="323" width="1" height="1"/><rect x="327" y="309" width="1" height="1"/><rect x="327" y="323" width="1" height="1"/><rect x="329" y="309" width="1" height="1"/><rect x="329" y="323" width="1" height="1"/><rect x="331" y="309" width="1" height="1"/><rect x="331" y="323" width="1" height="1"/><rect x="333" y="309" width="1" height="1"/><rect x="333" y="323" width="1" height="1"/><rect x="334" y="310" width="1" height="1"/><rect x="334" y="312" width="1" height="1"/><rect x="334" y="314" width="1" height="1"/><rect x="334" y="316" width="1" height="1"/><rect x="334" y="318" width="1" height="1"/><rect x="334" y="320" width="1" height="1"/><rect x="334" y="322" width="1" height="1"/></svg>
<div style="left:471px;top:305px;width:75px;height:23px;background:#D4D0C8;box-shadow:inset -1px -1px #404040,inset 1px 1px #FFFFFF,inset -2px -2px #808080"></div>
<div style="left:265px;top:345px;width:169px;height:54px;border:1px solid #FFFFFF;box-sizing:border-box"></div>
<div style="left:264px;top:344px;width:169px;height:54px;border:1px solid #808080;box-sizing:border-box"></div>
<div style="left:271px;top:339px;width:47px;height:10px;background:#D4D0C8"></div>
<div style="left:274px;top:368px;width:53px;height:21px;background:#FFFFFF;box-shadow:inset -1px -1px #FFFFFF,inset 1px 1px #808080,inset -2px -2px #D4D0C8,inset 2px 2px #404040"></div>
<div style="left:328px;top:368px;width:16px;height:10px;background:#D4D0C8;box-shadow:inset -1px -1px #404040,inset 1px 1px #D4D0C8,inset -2px -2px #808080,inset 2px 2px #FFFFFF"></div>
<div style="left:328px;top:379px;width:16px;height:10px;background:#D4D0C8;box-shadow:inset -1px -1px #404040,inset 1px 1px #D4D0C8,inset -2px -2px #808080,inset 2px 2px #FFFFFF"></div>
<svg style="left:334px;top:372px" width="3" height="2" shape-rendering="crispEdges"><rect x="1" y="0" width="1" height="1" fill="#000"/><rect x="0" y="1" width="1" height="1" fill="#000"/><rect x="1" y="1" width="1" height="1" fill="#000"/><rect x="2" y="1" width="1" height="1" fill="#000"/></svg>
<svg style="left:334px;top:383px" width="3" height="2" shape-rendering="crispEdges"><rect x="0" y="0" width="1" height="1" fill="#000"/><rect x="1" y="0" width="1" height="1" fill="#000"/><rect x="2" y="0" width="1" height="1" fill="#000"/><rect x="1" y="1" width="1" height="1" fill="#000"/></svg>
<div style="left:354px;top:368px;width:53px;height:21px;background:#FFFFFF;box-shadow:inset -1px -1px #FFFFFF,inset 1px 1px #808080,inset -2px -2px #D4D0C8,inset 2px 2px #404040"></div>
<div style="left:408px;top:368px;width:16px;height:10px;background:#D4D0C8;box-shadow:inset -1px -1px #404040,inset 1px 1px #D4D0C8,inset -2px -2px #808080,inset 2px 2px #FFFFFF"></div>
<div style="left:408px;top:379px;width:16px;height:10px;background:#D4D0C8;box-shadow:inset -1px -1px #404040,inset 1px 1px #D4D0C8,inset -2px -2px #808080,inset 2px 2px #FFFFFF"></div>
<svg style="left:414px;top:372px" width="3" height="2" shape-rendering="crispEdges"><rect x="1" y="0" width="1" height="1" fill="#000"/><rect x="0" y="1" width="1" height="1" fill="#000"/><rect x="1" y="1" width="1" height="1" fill="#000"/><rect x="2" y="1" width="1" height="1" fill="#000"/></svg>
<svg style="left:414px;top:383px" width="3" height="2" shape-rendering="crispEdges"><rect x="0" y="0" width="1" height="1" fill="#000"/><rect x="1" y="0" width="1" height="1" fill="#000"/><rect x="2" y="0" width="1" height="1" fill="#000"/><rect x="1" y="1" width="1" height="1" fill="#000"/></svg>
<div style="left:450px;top:345px;width:163px;height:77px;border:1px solid #FFFFFF;box-sizing:border-box"></div>
<div style="left:449px;top:344px;width:163px;height:77px;border:1px solid #808080;box-sizing:border-box"></div>
<div style="left:456px;top:339px;width:41px;height:10px;background:#D4D0C8"></div>
<div style="left:459px;top:360px;width:13px;height:13px;background:#FFFFFF;box-shadow:inset -1px -1px #FFFFFF,inset 1px 1px #808080,inset -2px -2px #D4D0C8,inset 2px 2px #404040"></div>
<div style="left:459px;top:373px;width:13px;height:13px;background:#FFFFFF;box-shadow:inset -1px -1px #FFFFFF,inset 1px 1px #808080,inset -2px -2px #D4D0C8,inset 2px 2px #404040"></div>
<div style="left:519px;top:391px;width:63px;height:21px;background:#FFFFFF;box-shadow:inset -1px -1px #FFFFFF,inset 1px 1px #808080,inset -2px -2px #D4D0C8,inset 2px 2px #404040"></div>
<div style="left:583px;top:391px;width:16px;height:10px;background:#D4D0C8;box-shadow:inset -1px -1px #404040,inset 1px 1px #D4D0C8,inset -2px -2px #808080,inset 2px 2px #FFFFFF"></div>
<div style="left:583px;top:402px;width:16px;height:10px;background:#D4D0C8;box-shadow:inset -1px -1px #404040,inset 1px 1px #D4D0C8,inset -2px -2px #808080,inset 2px 2px #FFFFFF"></div>
<svg style="left:589px;top:395px" width="3" height="2" shape-rendering="crispEdges"><rect x="1" y="0" width="1" height="1" fill="#000"/><rect x="0" y="1" width="1" height="1" fill="#000"/><rect x="1" y="1" width="1" height="1" fill="#000"/><rect x="2" y="1" width="1" height="1" fill="#000"/></svg>
<svg style="left:589px;top:406px" width="3" height="2" shape-rendering="crispEdges"><rect x="0" y="0" width="1" height="1" fill="#000"/><rect x="1" y="0" width="1" height="1" fill="#000"/><rect x="2" y="0" width="1" height="1" fill="#000"/><rect x="1" y="1" width="1" height="1" fill="#000"/></svg>
<div style="left:259px;top:427px;width:75px;height:23px;background:#D4D0C8;box-shadow:inset -1px -1px #404040,inset 1px 1px #FFFFFF,inset -2px -2px #808080"></div>
<div style="left:344px;top:427px;width:75px;height:23px;background:#D4D0C8;box-shadow:inset -1px -1px #404040,inset 1px 1px #FFFFFF,inset -2px -2px #808080"></div>
<div style="left:429px;top:427px;width:75px;height:23px;background:#D4D0C8;box-shadow:inset -1px -1px #404040,inset 1px 1px #FFFFFF,inset -2px -2px #808080"></div>
<div style="left:514px;top:427px;width:75px;height:23px;background:#D4D0C8;box-shadow:inset -1px -1px #404040,inset 1px 1px #FFFFFF,inset -2px -2px #808080"></div>
<div style="left:599px;top:427px;width:75px;height:23px;background:#D4D0C8;box-shadow:inset -1px -1px #404040,inset 1px 1px #FFFFFF,inset -2px -2px #808080"></div>
<div style="left:449px;top:470px;width:75px;height:23px;background:#D4D0C8;box-shadow:inset -1px -1px #404040,inset 1px 1px #FFFFFF,inset -2px -2px #808080"></div>
<div style="left:530px;top:470px;width:75px;height:23px;background:#D4D0C8;box-shadow:inset -1px -1px #404040,inset 1px 1px #FFFFFF,inset -2px -2px #808080"></div>
<div style="left:611px;top:470px;width:75px;height:23px;background:#D4D0C8;box-shadow:inset -1px -1px #404040,inset 1px 1px #FFFFFF,inset -2px -2px #808080"></div>
<span style="left:6px;top:7px;font-weight:bold;letter-spacing:0.412px;color:#FFFFFF;">Orario My_Schedule</span>
<span style="left:16px;top:34px;letter-spacing:0.2px;">Indice</span>
<span style="left:128px;top:34px;letter-spacing:-0.214px;">Azione Successiva (Follow-up)</span>
<span style="left:57px;top:32px;">Destinazioni</span>
<span style="left:97px;top:73px;letter-spacing:1.0px;">ID</span>
<span style="left:122px;top:70px;letter-spacing:-0.2px;">My_Schedule</span>
<span style="left:28px;top:97px;letter-spacing:-0.133px;">Periodo di tempo</span>
<span style="left:126px;top:96px;color:#808080;">1</span>
<span style="left:58px;top:123px;">From hour</span>
<span style="left:126px;top:122px;color:#808080;">0</span>
<span style="left:72px;top:144px;">To hour</span>
<span style="left:126px;top:143px;color:#808080;">0</span>
<span style="left:79px;top:170px;letter-spacing:-0.333px;">Ricicla</span>
<span style="left:126px;top:169px;">0</span>
<span style="left:32px;top:203px;letter-spacing:-0.19px;">Tempo di processamento</span>
<span style="left:47px;top:223px;letter-spacing:-0.143px;">Assoluto</span>
<span style="left:111px;top:223px;letter-spacing:0.286px;">Relativo</span>
<span style="left:178px;top:223px;">Ogni ora</span>
<span style="left:316px;top:62px;font-weight:bold;letter-spacing:0.286px;">Località</span>
<span style="left:371px;top:62px;font-weight:bold;">Blocco</span>
<span style="left:418px;top:62px;font-weight:bold;letter-spacing:1.25px;">tempo</span>
<span style="left:467px;top:62px;font-weight:bold;letter-spacing:0.4px;">Azioni</span>
<span style="left:512px;top:62px;font-weight:bold;letter-spacing:0.8px;">libero</span>
<span style="left:283px;top:82px;font-weight:bold;">1</span>
<span style="left:283px;top:102px;font-weight:bold;">2</span>
<span style="left:283px;top:122px;font-weight:bold;">3</span>
<span style="left:312px;top:80px;font-size:10px;letter-spacing:-0.286px;color:#FFFFFF;">Stazione</span>
<span style="left:415px;top:80px;font-size:10px;letter-spacing:-0.25px;color:#FFFFFF;">00:00</span>
<span style="left:368px;top:100px;font-size:10px;">03</span>
<span style="left:415px;top:100px;font-size:10px;letter-spacing:-0.25px;">00:00</span>
<span style="left:312px;top:120px;font-size:10px;letter-spacing:-0.286px;">Stazione</span>
<span style="left:415px;top:120px;font-size:10px;letter-spacing:-0.25px;">00:00</span>
<span style="left:343px;top:267px;letter-spacing:-0.286px;">Località</span>
<span style="left:267px;top:284px;letter-spacing:-0.286px;">Stazione</span>
<span style="left:553px;top:267px;letter-spacing:-0.4px;">Blocco</span>
<span style="left:475px;top:284px;">03</span>
<span style="left:281px;top:310px;letter-spacing:-0.143px;">Aggiungi</span>
<span style="left:488px;top:310px;letter-spacing:-0.143px;">Aggiungi</span>
<span style="left:271px;top:339px;letter-spacing:0.143px;">Partenza</span>
<span style="left:299px;top:356px;">Ore</span>
<span style="left:280px;top:372px;">0</span>
<span style="left:373px;top:356px;letter-spacing:-0.2px;">Minuti</span>
<span style="left:360px;top:372px;">0</span>
<span style="left:457px;top:339px;letter-spacing:0.143px;">Dettagli</span>
<span style="left:476px;top:361px;letter-spacing:0.158px;">Inverti orientamento</span>
<span style="left:476px;top:374px;letter-spacing:-0.12px;">Sbloccare prima di avviare</span>
<span style="left:458px;top:396px;letter-spacing:0.111px;">Ritardo IN</span>
<span style="left:525px;top:395px;">0</span>
<span style="left:279px;top:432px;letter-spacing:-0.667px;">Elimina</span>
<span style="left:360px;top:432px;">Modifica</span>
<span style="left:458px;top:432px;letter-spacing:1.0px;">Su</span>
<span style="left:544px;top:432px;letter-spacing:-0.5px;">Giù</span>
<span style="left:616px;top:432px;letter-spacing:0.25px;">Azioni...</span>
<span style="left:479px;top:475px;letter-spacing:-1.0px;">OK</span>
<span style="left:550px;top:475px;letter-spacing:-0.333px;">Annulla</span>
<span style="left:631px;top:475px;letter-spacing:-0.333px;">Applica</span>
</body></html>
